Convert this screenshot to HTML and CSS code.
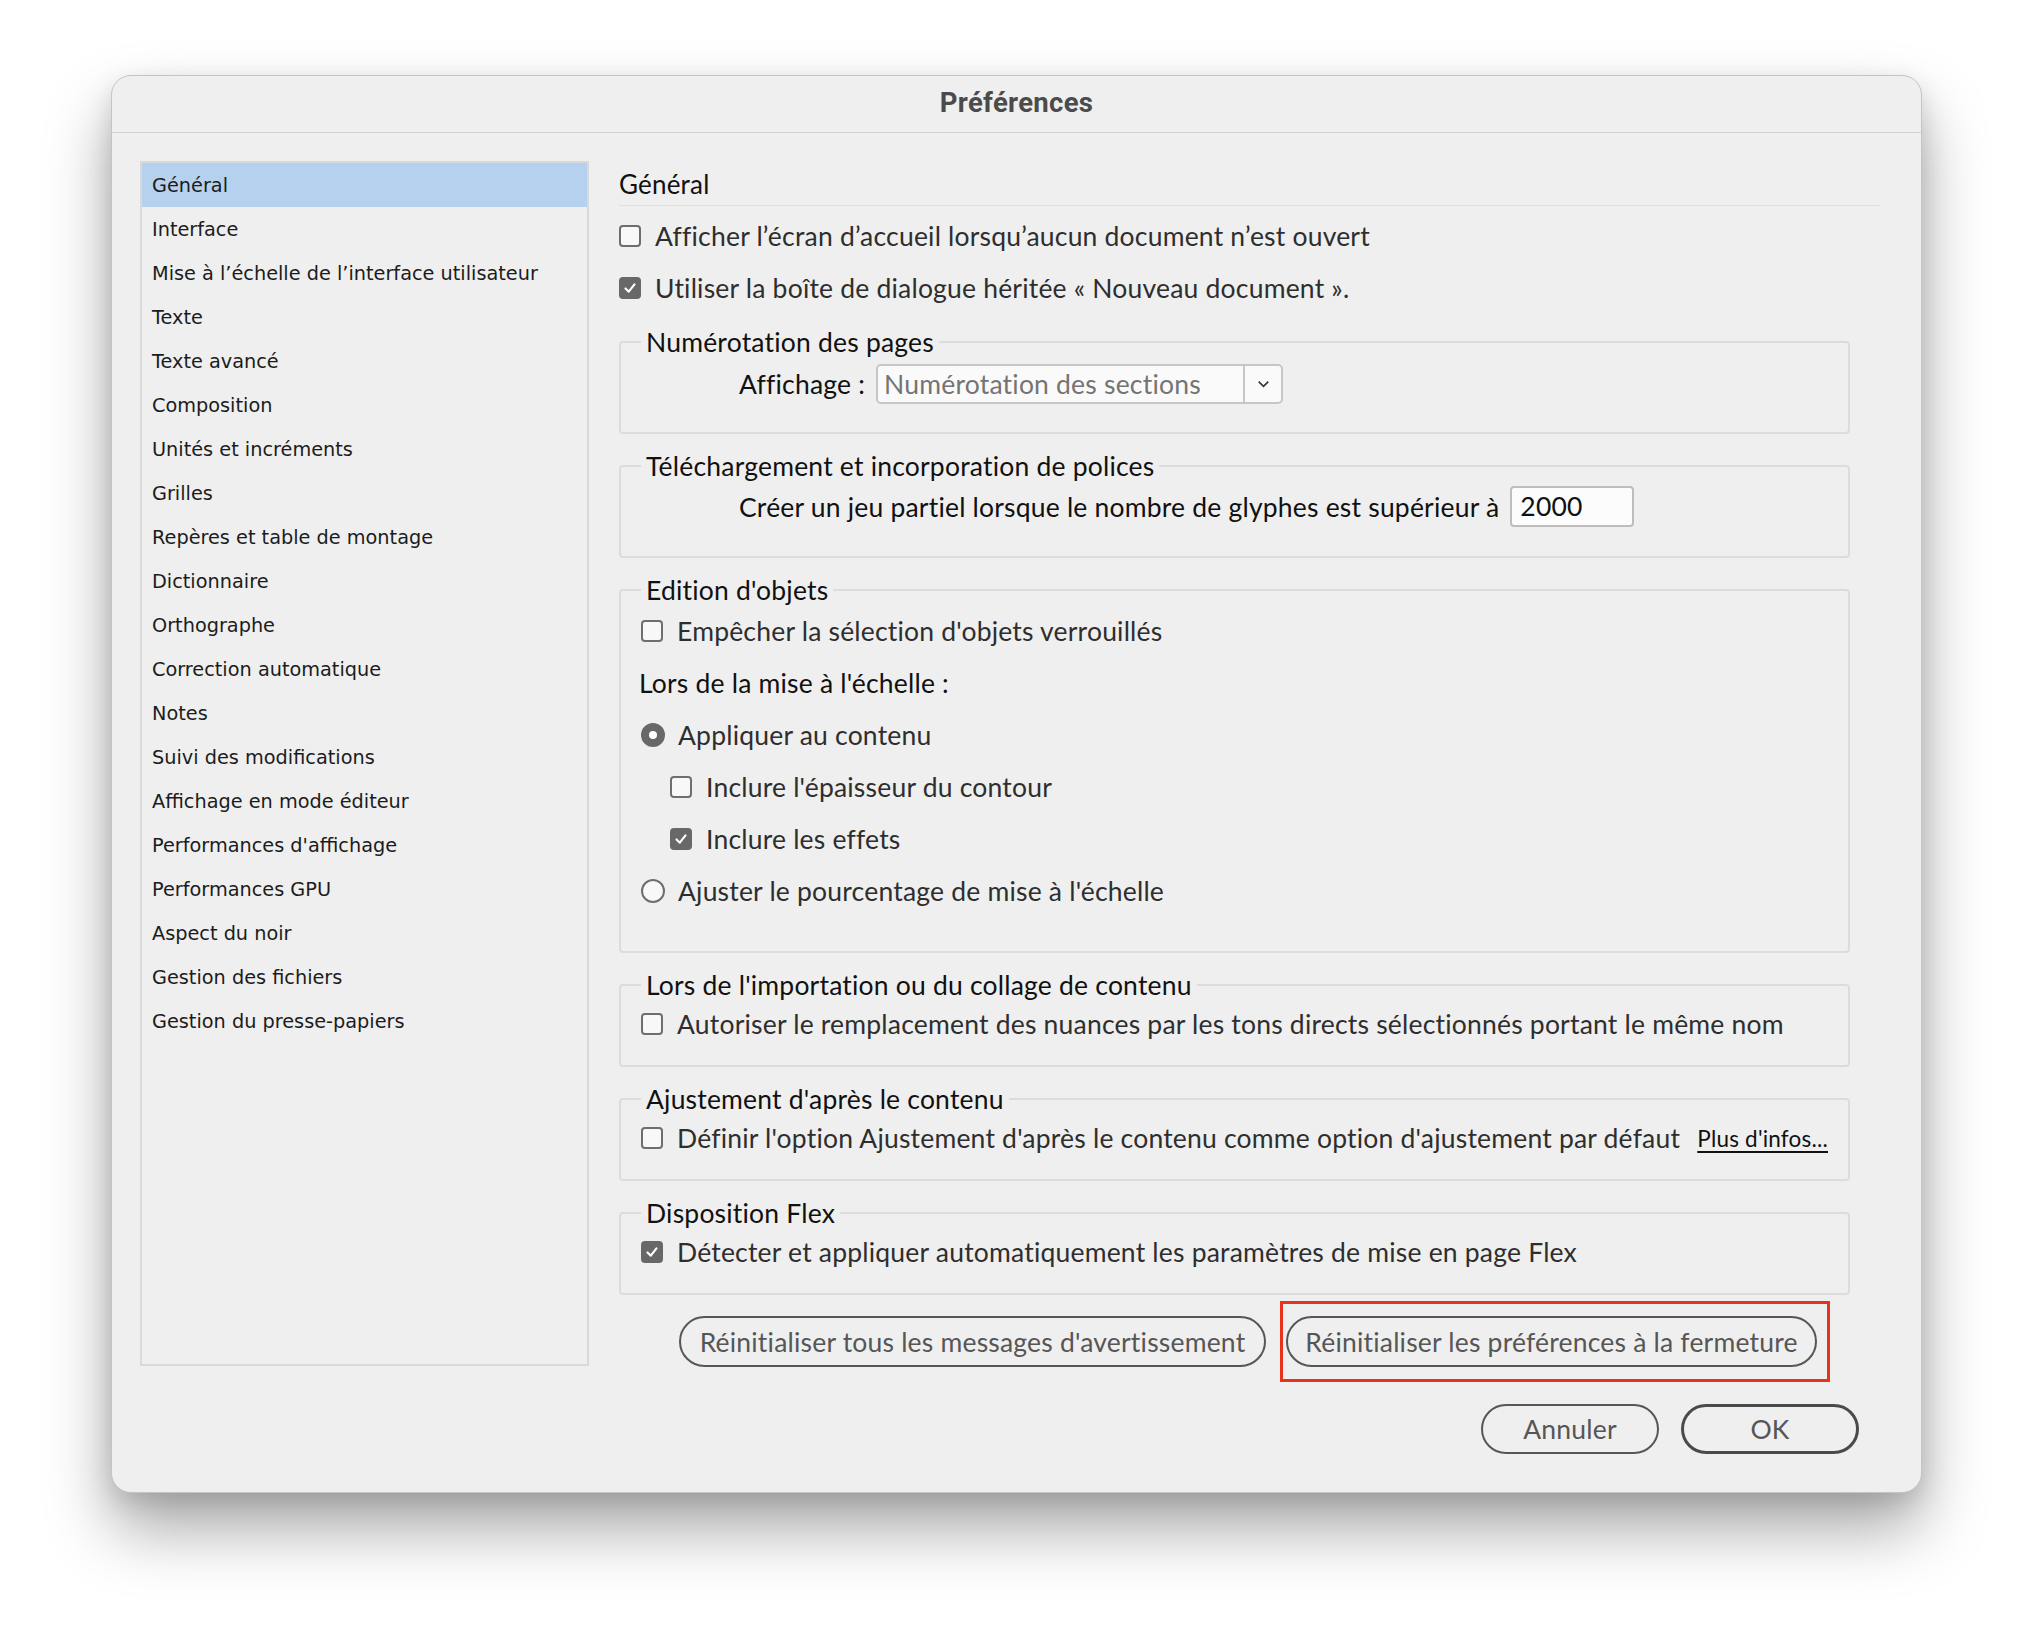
FILE: index.html
```html
<!DOCTYPE html>
<html lang="fr">
<head>
<meta charset="utf-8">
<title>Préférences</title>
<link rel="stylesheet" href="styles.css">
</head>
<body>
<div class="window">
  <div class="titlebar">Préférences</div>
  <div class="body">
    <ul class="sidebar">
      <li class="selected">Général</li>
      <li>Interface</li>
      <li>Mise à l’échelle de l’interface utilisateur</li>
      <li>Texte</li>
      <li>Texte avancé</li>
      <li>Composition</li>
      <li>Unités et incréments</li>
      <li>Grilles</li>
      <li>Repères et table de montage</li>
      <li>Dictionnaire</li>
      <li>Orthographe</li>
      <li>Correction automatique</li>
      <li>Notes</li>
      <li>Suivi des modifications</li>
      <li>Affichage en mode éditeur</li>
      <li>Performances d'affichage</li>
      <li>Performances GPU</li>
      <li>Aspect du noir</li>
      <li>Gestion des fichiers</li>
      <li>Gestion du presse-papiers</li>
    </ul>
    <div class="content">
      <h2 class="heading">Général</h2>
      <div class="row"><span class="cb"></span><span class="lbl">Afficher l’écran d’accueil lorsqu’aucun document n’est ouvert</span></div>
      <div class="row"><span class="cb on"><svg viewBox="0 0 22 22"><path d="M5.5 11.5 L9.5 15.5 L16.5 6.5"/></svg></span><span class="lbl">Utiliser la boîte de dialogue héritée « Nouveau document ».</span></div>

      <fieldset class="group g1">
        <legend>Numérotation des pages</legend>
        <div class="frow">
          <span class="flabel">Affichage :</span>
          <div class="select">
            <span class="sel-text">Numérotation des sections</span>
            <span class="sel-btn"><svg viewBox="0 0 16 10"><path d="M2 2 L8 8 L14 2"/></svg></span>
          </div>
        </div>
      </fieldset>

      <fieldset class="group g2">
        <legend>Téléchargement et incorporation de polices</legend>
        <div class="frow">
          <span class="flabel">Créer un jeu partiel lorsque le nombre de glyphes est supérieur à</span>
          <span class="input">2000</span>
        </div>
      </fieldset>

      <fieldset class="group g3">
        <legend>Edition d'objets</legend>
        <div class="row"><span class="cb"></span><span class="lbl">Empêcher la sélection d'objets verrouillés</span></div>
        <div class="row"><span class="plain">Lors de la mise à l'échelle :</span></div>
        <div class="row"><span class="rb on"></span><span class="lbl">Appliquer au contenu</span></div>
        <div class="row sub"><span class="cb"></span><span class="lbl">Inclure l'épaisseur du contour</span></div>
        <div class="row sub"><span class="cb on"><svg viewBox="0 0 22 22"><path d="M5.5 11.5 L9.5 15.5 L16.5 6.5"/></svg></span><span class="lbl">Inclure les effets</span></div>
        <div class="row"><span class="rb"></span><span class="lbl">Ajuster le pourcentage de mise à l'échelle</span></div>
      </fieldset>

      <fieldset class="group gs">
        <legend>Lors de l'importation ou du collage de contenu</legend>
        <div class="row"><span class="cb"></span><span class="lbl">Autoriser le remplacement des nuances par les tons directs sélectionnés portant le même nom</span></div>
      </fieldset>

      <fieldset class="group gs">
        <legend>Ajustement d'après le contenu</legend>
        <div class="row"><span class="cb"></span><span class="lbl">Définir l'option Ajustement d'après le contenu comme option d'ajustement par défaut</span><a class="more">Plus d'infos...</a></div>
      </fieldset>

      <fieldset class="group gs">
        <legend>Disposition Flex</legend>
        <div class="row"><span class="cb on"><svg viewBox="0 0 22 22"><path d="M5.5 11.5 L9.5 15.5 L16.5 6.5"/></svg></span><span class="lbl">Détecter et appliquer automatiquement les paramètres de mise en page Flex</span></div>
      </fieldset>

      <div class="actions">
        <button class="pill wide">Réinitialiser tous les messages d'avertissement</button>
        <div class="highlight"><button class="pill wide2">Réinitialiser les préférences à la fermeture</button></div>
      </div>

      <div class="footer">
        <button class="pill small">Annuler</button>
        <button class="pill small ok">OK</button>
      </div>
    </div>
  </div>
</div>
</body>
</html>
```
FILE: styles.css
```css
html, body {
  margin: 0;
  padding: 0;
  background: #ffffff;
}
body {
  box-sizing: border-box;
  min-height: 1642px;
  padding: 75px 0 149px 111px;
  font-family: Lato, "Open Sans", sans-serif;
}
.window {
  width: 1811px;
  height: 1418px;
  box-sizing: border-box;
  background: #efefef;
  border-radius: 20px;
  border: 1px solid #c4c4c4;
  box-shadow: 0 36px 64px rgba(0, 0, 0, 0.34), 0 8px 24px rgba(0, 0, 0, 0.12);
}
.titlebar {
  height: 56px;
  border-bottom: 1px solid #d3d3d3;
  text-align: center;
  font-family: Roboto, Inter, sans-serif;
  font-weight: 700;
  font-size: 27.5px;
  letter-spacing: 0.3px;
  line-height: 54px;
  color: #4b4b4b;
}
.body {
  display: flex;
  padding: 28px 41px 0 28px;
}
.sidebar {
  list-style: none;
  margin: 0;
  padding: 0;
  width: 449px;
  height: 1205px;
  box-sizing: border-box;
  border: 2px solid #d9d9d9;
  font-family: "DejaVu Sans", Verdana, sans-serif;
  font-size: 19.3px;
  color: #1c1c1c;
  flex: none;
}
.sidebar li {
  height: 44px;
  line-height: 46px;
  padding-left: 10px;
  white-space: nowrap;
}
.sidebar li.selected {
  background: #b5d1ee;
}
.content {
  flex: 1;
  margin-left: 30px;
  padding-top: 8px;
  color: #111;
  font-size: 26.5px;
  letter-spacing: 0.2px;
}
.heading {
  margin: 0 0 4px 0;
  font-weight: 400;
  font-size: 26px;
  line-height: 30px;
  padding-bottom: 6px;
  border-bottom: 1px solid #e0e0e0;
  color: #111;
}
.row {
  height: 52px;
  display: flex;
  align-items: center;
  white-space: nowrap;
}
.lbl {
  color: #2e2e2e;
  margin-left: 14px;
}
.plain {
  color: #111;
  margin-left: -2px;
}
.cb {
  width: 22px;
  height: 22px;
  box-sizing: border-box;
  border: 2px solid #6e6e6e;
  border-radius: 4px;
  background: #f8f8f8;
  flex: none;
  display: flex;
  align-items: center;
  justify-content: center;
}
.cb.on {
  background: #686868;
  border-color: #686868;
}
.cb svg {
  width: 20px;
  height: 20px;
  fill: none;
  stroke: #ffffff;
  stroke-width: 2.6;
  stroke-linecap: round;
  stroke-linejoin: round;
}
.rb {
  width: 24px;
  height: 24px;
  box-sizing: border-box;
  border: 2px solid #6e6e6e;
  border-radius: 50%;
  background: #f8f8f8;
  flex: none;
}
.rb.on {
  border: 8px solid #686868;
  background: #ffffff;
}
.rb + .lbl {
  margin-left: 13px;
}
.row.sub {
  padding-left: 29px;
}
.group {
  margin: 13px 30px 0 0;
  border: 2px solid #dcdcdc;
  border-radius: 4px;
  padding: 0 20px;
}
.group + .group {
  margin-top: 17px;
}
.group legend {
  font-size: 26.5px;
  line-height: 30px;
  padding: 0 5px;
  margin-left: 0;
  color: #111;
}
.g1 {
  padding-top: 7px;
  padding-bottom: 28px;
}
.g2 {
  padding-top: 5px;
  padding-bottom: 29px;
}
.g3 {
  padding-top: 0;
  padding-bottom: 34px;
}
.gs {
  padding-top: 0;
  padding-bottom: 15px;
}
.gs .row {
  margin-top: -2px;
}
.frow {
  display: flex;
  align-items: center;
  padding-left: 98px;
  white-space: nowrap;
}
.flabel {
  color: #111;
}
.select {
  margin-left: 11px;
  width: 407px;
  height: 40px;
  box-sizing: border-box;
  border: 2px solid #c6c6c6;
  border-radius: 5px;
  background: #fafafa;
  display: flex;
  align-items: center;
}
.sel-text {
  flex: 1;
  padding-left: 6px;
  color: #747474;
}
.sel-btn {
  width: 36px;
  height: 100%;
  border-left: 2px solid #c6c6c6;
  display: flex;
  align-items: center;
  justify-content: center;
}
.sel-btn svg {
  width: 13px;
  height: 8px;
  fill: none;
  stroke: #333;
  stroke-width: 2;
}
.input {
  margin-left: 11px;
  width: 124px;
  height: 41px;
  box-sizing: border-box;
  border: 2px solid #bdbdbd;
  border-radius: 4px;
  background: #fcfcfc;
  padding-left: 8px;
  line-height: 37px;
  color: #111;
}
.more {
  margin-left: auto;
  font-size: 22.5px;
  color: #111;
  text-decoration: underline;
  text-underline-offset: 4px;
}
.actions {
  margin-top: 6px;
  display: flex;
  justify-content: flex-end;
  align-items: center;
  padding-right: 50px;
}
.pill {
  font-family: Lato, "Open Sans", sans-serif;
  font-size: 26.5px;
  letter-spacing: 0.2px;
  color: #565656;
  background: transparent;
  border: 2px solid #565656;
  border-radius: 26px;
  height: 51px;
  padding: 0;
  box-sizing: border-box;
}
.wide {
  width: 587px;
}
.wide2 {
  width: 531px;
}
.highlight {
  margin-left: 14px;
  border: 3px solid #e8331c;
  padding: 12px 10px 12px 3px;
}
.footer {
  margin-top: 22px;
  display: flex;
  justify-content: flex-end;
  gap: 22px;
  padding-right: 21px;
}
.pill.small {
  width: 178px;
  height: 50px;
}
.pill.ok {
  border-width: 3px;
  border-color: #4a4a4a;
}
```
